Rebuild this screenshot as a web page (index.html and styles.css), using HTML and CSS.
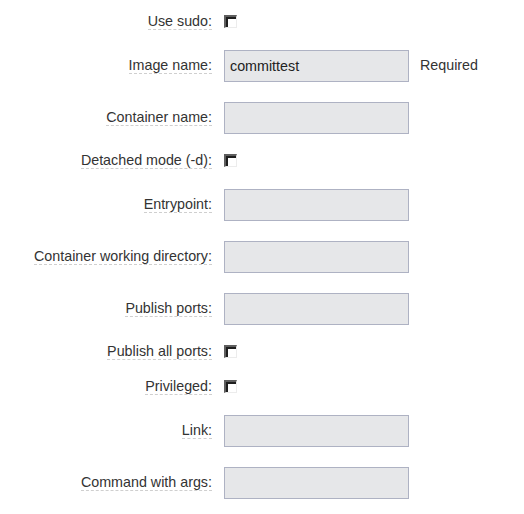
FILE: index.html
```html
<!DOCTYPE html>
<html>
<head>
<meta charset="utf-8">
<link rel="stylesheet" href="styles.css">
</head>
<body>
<form class="form">
  <div class="row cbrow"><label class="lbl"><span>Use sudo:</span></label><span class="cb"></span></div>
  <div class="row"><label class="lbl"><span>Image name:</span></label><span class="inp">committest</span><span class="note">Required</span></div>
  <div class="row"><label class="lbl"><span>Container name:</span></label><span class="inp"></span></div>
  <div class="row cbrow"><label class="lbl"><span>Detached mode (-d):</span></label><span class="cb"></span></div>
  <div class="row"><label class="lbl"><span>Entrypoint:</span></label><span class="inp"></span></div>
  <div class="row"><label class="lbl"><span>Container working directory:</span></label><span class="inp"></span></div>
  <div class="row"><label class="lbl"><span>Publish ports:</span></label><span class="inp"></span></div>
  <div class="row cbrow"><label class="lbl"><span>Publish all ports:</span></label><span class="cb"></span></div>
  <div class="row cbrow"><label class="lbl"><span>Privileged:</span></label><span class="cb"></span></div>
  <div class="row"><label class="lbl"><span>Link:</span></label><span class="inp"></span></div>
  <div class="row"><label class="lbl"><span>Command with args:</span></label><span class="inp"></span></div>
</form>
</body>
</html>
```

FILE: styles.css
```css
html, body {
  margin: 0;
  padding: 0;
  background: #ffffff;
}
body {
  font-family: "Liberation Sans", Arial, sans-serif;
  font-size: 14.3px;
  color: #333333;
  padding-top: 5px;
}
.form {
  display: flex;
  flex-direction: column;
}
.row {
  display: grid;
  grid-template-columns: 212px 185px auto;
  column-gap: 12px;
  align-items: center;
  padding: 10px 0;
}
.row.cbrow {
  padding: 8px 0 10px;
  align-items: start;
}
.lbl {
  justify-self: end;
}
.row .lbl {
  margin-top: -2px;
}
.row.cbrow .lbl {
  margin-top: 0;
}
.lbl span {
  display: inline-block;
  line-height: 16px;
  border-bottom: 1px dashed #cfcfcf;
}
.inp {
  box-sizing: border-box;
  height: 32px;
  border: 1px solid #aeb2c3;
  background: #e6e7e9;
  padding: 0 5px;
  line-height: 30px;
  color: #222222;
}
.note {
  margin-left: -1px;
  margin-top: -2px;
  color: #333333;
}
.cb {
  box-sizing: border-box;
  width: 13px;
  height: 13px;
  margin-top: 2px;
  background: #ffffff;
  border-style: solid;
  border-width: 2px 1px 1px 2px;
  border-color: #5e5e5e #ececec #ececec #5e5e5e;
  box-shadow: inset 2px 2px 0 #1e1e1e;
}
```
